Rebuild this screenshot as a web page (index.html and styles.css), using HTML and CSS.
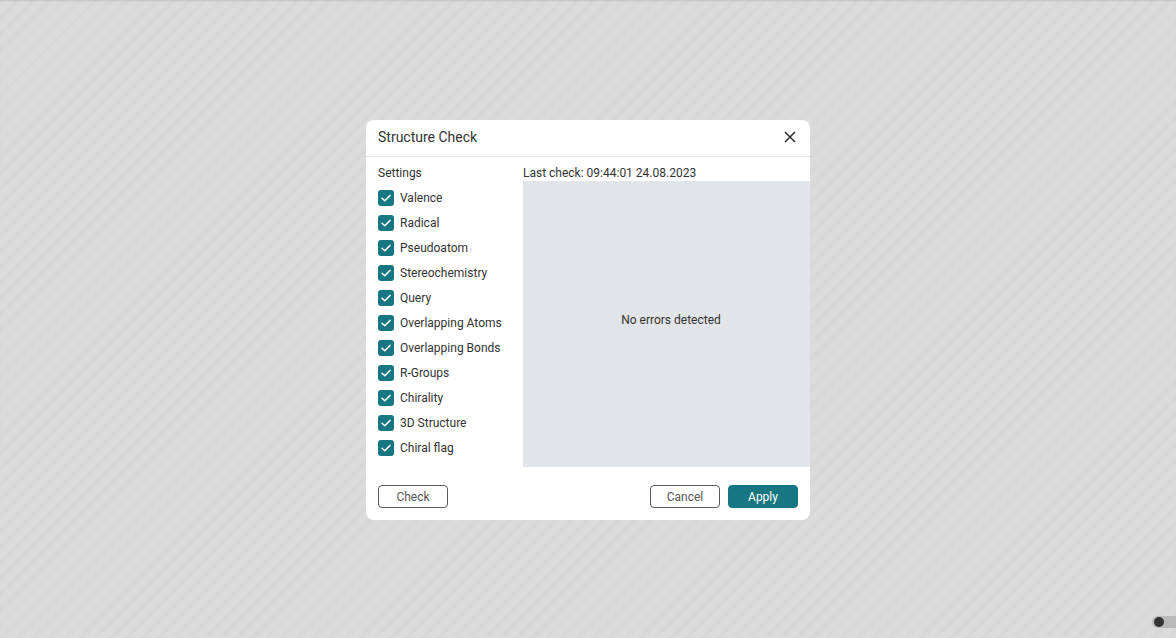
FILE: index.html
```html
<!DOCTYPE html>
<html>
<head>
<meta charset="utf-8">
<link rel="stylesheet" href="styles.css">
</head>
<body>
<div class="page">
  <div class="dialog">
    <div class="header">
      <span class="title">Structure Check</span>
      <button class="close" aria-label="Close">
        <svg width="12" height="12" viewBox="0 0 12 12"><path d="M1 1 L11 11 M11 1 L1 11" stroke="#333" stroke-width="1.6" fill="none"/></svg>
      </button>
    </div>
    <div class="body">
      <div class="settings">
        <div class="label">Settings</div>
        <div class="opts">
          <label class="opt"><span class="cb"><svg width="16" height="16" viewBox="0 0 16 16"><path d="M4 8.2 L6.8 10.8 L12 5.4" stroke="#fff" stroke-width="1.5" fill="none" stroke-linecap="round" stroke-linejoin="round"/></svg></span>Valence</label>
          <label class="opt"><span class="cb"><svg width="16" height="16" viewBox="0 0 16 16"><path d="M4 8.2 L6.8 10.8 L12 5.4" stroke="#fff" stroke-width="1.5" fill="none" stroke-linecap="round" stroke-linejoin="round"/></svg></span>Radical</label>
          <label class="opt"><span class="cb"><svg width="16" height="16" viewBox="0 0 16 16"><path d="M4 8.2 L6.8 10.8 L12 5.4" stroke="#fff" stroke-width="1.5" fill="none" stroke-linecap="round" stroke-linejoin="round"/></svg></span>Pseudoatom</label>
          <label class="opt"><span class="cb"><svg width="16" height="16" viewBox="0 0 16 16"><path d="M4 8.2 L6.8 10.8 L12 5.4" stroke="#fff" stroke-width="1.5" fill="none" stroke-linecap="round" stroke-linejoin="round"/></svg></span>Stereochemistry</label>
          <label class="opt"><span class="cb"><svg width="16" height="16" viewBox="0 0 16 16"><path d="M4 8.2 L6.8 10.8 L12 5.4" stroke="#fff" stroke-width="1.5" fill="none" stroke-linecap="round" stroke-linejoin="round"/></svg></span>Query</label>
          <label class="opt"><span class="cb"><svg width="16" height="16" viewBox="0 0 16 16"><path d="M4 8.2 L6.8 10.8 L12 5.4" stroke="#fff" stroke-width="1.5" fill="none" stroke-linecap="round" stroke-linejoin="round"/></svg></span>Overlapping Atoms</label>
          <label class="opt"><span class="cb"><svg width="16" height="16" viewBox="0 0 16 16"><path d="M4 8.2 L6.8 10.8 L12 5.4" stroke="#fff" stroke-width="1.5" fill="none" stroke-linecap="round" stroke-linejoin="round"/></svg></span>Overlapping Bonds</label>
          <label class="opt"><span class="cb"><svg width="16" height="16" viewBox="0 0 16 16"><path d="M4 8.2 L6.8 10.8 L12 5.4" stroke="#fff" stroke-width="1.5" fill="none" stroke-linecap="round" stroke-linejoin="round"/></svg></span>R-Groups</label>
          <label class="opt"><span class="cb"><svg width="16" height="16" viewBox="0 0 16 16"><path d="M4 8.2 L6.8 10.8 L12 5.4" stroke="#fff" stroke-width="1.5" fill="none" stroke-linecap="round" stroke-linejoin="round"/></svg></span>Chirality</label>
          <label class="opt"><span class="cb"><svg width="16" height="16" viewBox="0 0 16 16"><path d="M4 8.2 L6.8 10.8 L12 5.4" stroke="#fff" stroke-width="1.5" fill="none" stroke-linecap="round" stroke-linejoin="round"/></svg></span>3D Structure</label>
          <label class="opt"><span class="cb"><svg width="16" height="16" viewBox="0 0 16 16"><path d="M4 8.2 L6.8 10.8 L12 5.4" stroke="#fff" stroke-width="1.5" fill="none" stroke-linecap="round" stroke-linejoin="round"/></svg></span>Chiral flag</label>
        </div>
      </div>
      <div class="results">
        <div class="label">Last check: 09:44:01 24.08.2023</div>
        <div class="panel">No errors detected</div>
      </div>
    </div>
    <div class="footer">
      <button class="btn">Check</button>
      <div class="right">
        <button class="btn">Cancel</button>
        <button class="btn primary">Apply</button>
      </div>
    </div>
  </div>
  <div class="toggle"><span class="knob"></span></div>
</div>
</body>
</html>
```
FILE: styles.css
```css
html, body {
  margin: 0;
  padding: 0;
  width: 1176px;
  height: 638px;
  overflow: hidden;
}
body {
  font-family: Roboto, "Liberation Sans", sans-serif;
  color: #333;
}
.page {
  position: relative;
  width: 1176px;
  height: 638px;
  background-color: #dadada;
  background-image: repeating-linear-gradient(135deg, #d8d8d8 0px, #d8d8d8 4px, #dbdbdb 4px, #dbdbdb 11px);
  box-shadow: inset 0 2px 2px -1px rgba(0,0,0,0.10);
  display: flex;
  justify-content: center;
  padding-top: 120px;
  box-sizing: border-box;
}
.dialog {
  width: 444px;
  height: 400px;
  background: #fff;
  border-radius: 8px;
  display: flex;
  flex-direction: column;
  box-sizing: border-box;
}
.header {
  height: 37px;
  border-bottom: 1px solid #e1e5ea;
  box-sizing: border-box;
  display: flex;
  align-items: center;
  justify-content: space-between;
  padding: 0 12px 2px;
}
.title {
  font-size: 14px;
  color: #333;
}
.close {
  border: 0;
  background: none;
  padding: 0;
  width: 12px;
  height: 12px;
  display: flex;
  margin-right: 2px;
}
.body {
  display: flex;
  padding: 8px 0 0 12px;
  height: 311px;
  box-sizing: border-box;
}
.label {
  font-size: 12px;
  line-height: 16px;
  color: #333;
}
.settings {
  width: 145px;
}
.opts {
  display: flex;
  flex-direction: column;
  gap: 9px;
  margin-top: 9px;
}
.opt {
  display: flex;
  align-items: center;
  gap: 6px;
  font-size: 12px;
  line-height: 16px;
  color: #333;
}
.cb {
  width: 16px;
  height: 16px;
  border-radius: 3px;
  background: #167782;
  display: flex;
}
.results {
  flex: 1;
  display: flex;
  flex-direction: column;
}
.panel {
  height: 286px;
  padding: 0 0 9px 9px;
  box-sizing: border-box;
  background: #e1e4e8;
  display: flex;
  align-items: center;
  justify-content: center;
  font-size: 12px;
  color: #333;
}
.footer {
  display: flex;
  justify-content: space-between;
  align-items: flex-end;
  padding: 0 12px 12px;
  flex: 1;
}
.right {
  display: flex;
  gap: 8px;
}
.btn {
  width: 70px;
  height: 23px;
  border: 1px solid #5b5b5b;
  border-radius: 4px;
  background: #fff;
  font-family: Roboto, "Liberation Sans", sans-serif;
  font-size: 12px;
  color: #555;
  padding: 0;
}
.btn.primary {
  background: #167782;
  border-color: #167782;
  color: #fff;
}
.toggle {
  position: absolute;
  right: 0;
  bottom: 10px;
  width: 24px;
  height: 12px;
  border-radius: 6px 0 0 6px;
  background: #b9b9b9;
}
.knob {
  position: absolute;
  left: 2px;
  top: 1px;
  width: 10px;
  height: 10px;
  border-radius: 50%;
  background: #333;
}
```
